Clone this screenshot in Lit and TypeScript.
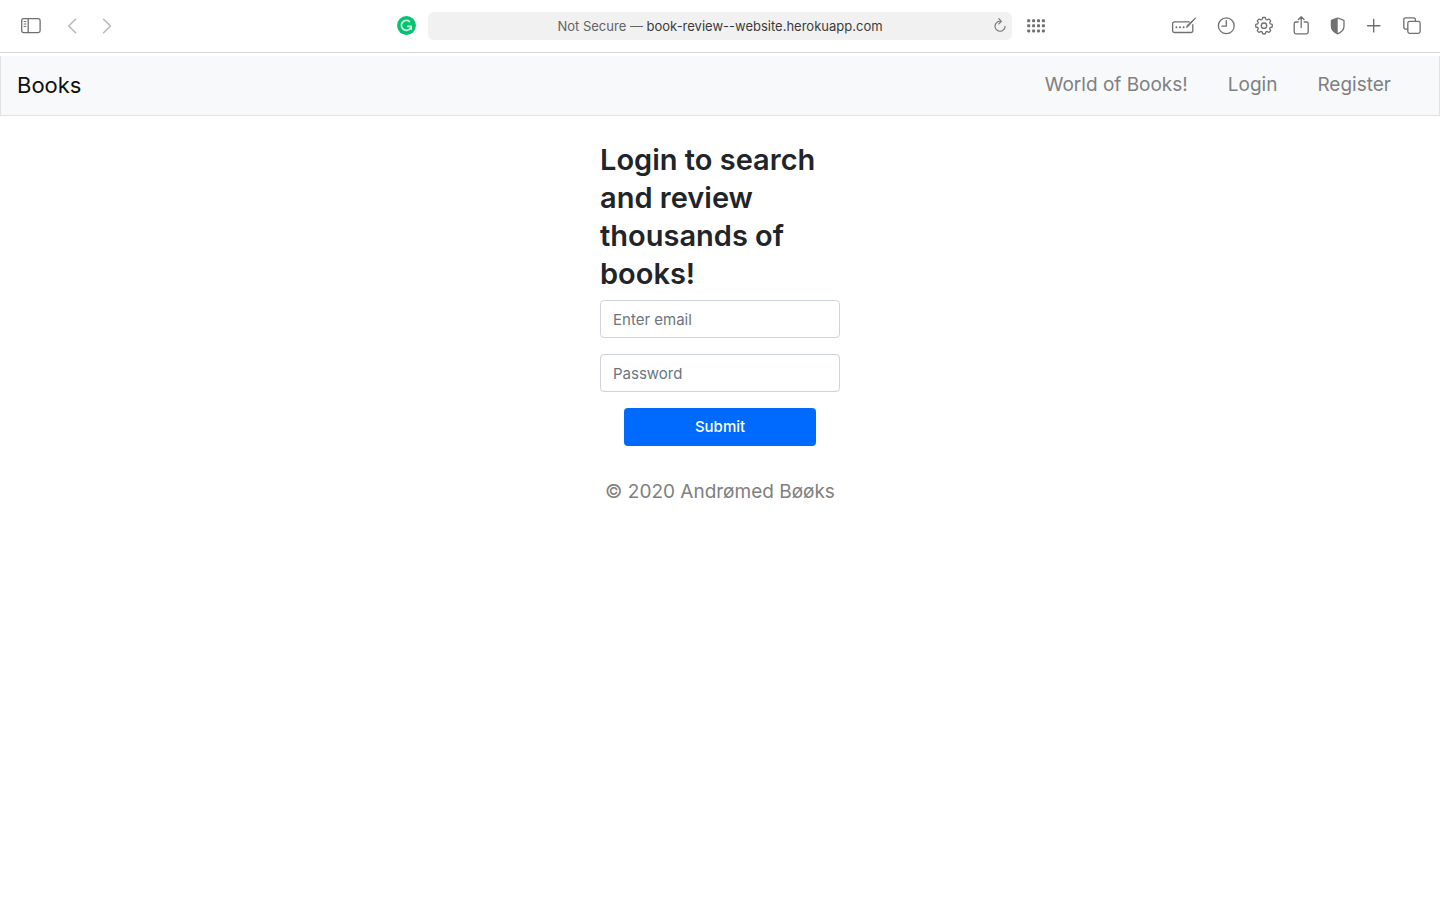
import { LitElement, html, css, svg } from "lit";
import { customElement } from "lit/decorators.js";

const gearPath = (() => {
  const teeth = 8;
  const parts: string[] = [];
  const at = (r: number, deg: number) => {
    const a = (deg * Math.PI) / 180;
    return `${(9 + r * Math.sin(a)).toFixed(2)} ${(9.7 - r * Math.cos(a)).toFixed(2)}`;
  };
  for (let i = 0; i < teeth; i++) {
    const d = (i * 360) / teeth;
    parts.push(`${i ? "L" : "M"}${at(6.6, d - 16)}L${at(8.3, d - 9)}A8.4 8.4 0 0 1 ${at(8.3, d + 9)}L${at(6.6, d + 16)}`);
    parts.push(`A2 2 0 0 0 ${at(6.6, d + 29)}`);
  }
  return parts.join("") + "Z";
})();

@customElement("browser-toolbar")
export class BrowserToolbar extends LitElement {
  static styles = css`
    :host {
      display: block;
      font-family: Inter, "Liberation Sans", sans-serif;
    }
    .bar {
      display: grid;
      grid-template-columns: minmax(0, 1fr) 40.5% minmax(0, 1fr);
      align-items: center;
      height: 52px;
      background: #fff;
      border-bottom: 1px solid #d8d8d8;
    }
    .side {
      display: flex;
      align-items: center;
      justify-content: space-between;
    }
    .start {
      padding: 0 12px 0 21px;
    }
    .end {
      padding: 0 19px 0 15px;
    }
    .group {
      display: flex;
      align-items: center;
    }
    .start .group {
      gap: 25px;
    }
    .end .group {
      gap: 20px;
    }
    button {
      display: block;
      margin: 0;
      padding: 0;
      border: 0;
      background: none;
      color: #707070;
      font: inherit;
      cursor: pointer;
    }
    .faint {
      color: #b9b9b9;
    }
    svg {
      display: block;
      fill: none;
      stroke: currentColor;
      stroke-width: 1.3;
      stroke-linecap: round;
      stroke-linejoin: round;
    }
    .address {
      display: grid;
      grid-template-columns: 19px minmax(0, 1fr) 19px;
      align-items: center;
      height: 28px;
      border-radius: 6px;
      background: #f1f1f1;
    }
    .url {
      grid-column: 2;
      font-size: 13px;
      line-height: 28px;
      color: #636363;
      white-space: nowrap;
    }
    .host {
      color: #3b3b3b;
    }
  `;

  render() {
    return html`
      <header class="bar">
        <div class="side start">
          <div class="group">
            <button aria-label="Show sidebar">
              <svg width="21" height="20" viewBox="0 0 21 20">
                <rect x="0.7" y="2.6" width="18.4" height="14" rx="1.8" />
                <path d="M7.2 2.6V16.6" />
                <path d="M3.1 5.6h1.8M3.1 8h1.8M3.1 10.4h1.8" stroke-width="1" />
              </svg>
            </button>
            <button class="faint" aria-label="Back">
              <svg width="10" height="20" viewBox="0 0 10 20"><path d="M8.6 3.3L1.7 10L8.6 16.7" stroke-width="1.6" /></svg>
            </button>
            <button class="faint" aria-label="Forward">
              <svg width="10" height="20" viewBox="0 0 10 20"><path d="M1.6 3.3L8.5 10L1.6 16.7" stroke-width="1.6" /></svg>
            </button>
          </div>
          <button aria-label="Grammarly">
            <svg width="19" height="20" viewBox="0 0 19 20">
              <circle cx="9.5" cy="9.5" r="9.4" fill="#06c270" stroke="none" />
              <path d="M13 5.8A5 5 0 1 0 13.9 11.6" stroke="#c9f5e0" stroke-width="1.7" stroke-linecap="butt" />
              <path d="M10.2 10.3H14.2V14" stroke="#c9f5e0" stroke-width="1.7" stroke-linecap="butt" stroke-linejoin="miter" />
            </svg>
          </button>
        </div>
        <div class="address">
          <button class="url">Not Secure — <span class="host">book-review--website.herokuapp.com</span></button>
          <button aria-label="Reload">
            <svg width="14" height="20" viewBox="0 0 14 20">
              <path d="M7.2 5.3A5 5 0 1 0 12 10.4" stroke-width="1.1" />
              <path d="M5.8 2.7L8.4 5.3L5.8 7.9" stroke-width="1.1" />
            </svg>
          </button>
        </div>
        <div class="side end">
          <button aria-label="Show top sites">
            <svg width="18" height="20" viewBox="0 0 18 20">
              ${[4.7, 9.8, 14.9].map((y) =>
                [1.7, 6.6, 11.5, 16.4].map(
                  (x) => svg`<rect x=${x - 1.5} y=${y - 1.5} width="3" height="3" rx="0.8" fill="currentColor" stroke="none" />`
                )
              )}
            </svg>
          </button>
          <div class="group">
            <button aria-label="AutoFill form">
              <svg width="26" height="20" viewBox="0 0 26 20">
                <path d="M18.3 5.9H3.4a1.8 1.8 0 0 0-1.8 1.8v7a1.8 1.8 0 0 0 1.8 1.8H20a1.8 1.8 0 0 0 1.8-1.8V8.6" />
                <path d="M24.4 2.2L17.2 10.4L15.6 11.5L16.2 9.6Z" fill="currentColor" stroke-width="1" />
                <path d="M5.4 11.3h.1M9 11.3h.1M12.6 11.3h.1" stroke-width="1.9" />
              </svg>
            </button>
            <button aria-label="History">
              <svg width="18" height="20" viewBox="0 0 18 20">
                <circle cx="9.3" cy="9.8" r="7.9" />
                <path d="M9.3 4.6V10.2H4.8" />
              </svg>
            </button>
            <button aria-label="Settings">
              <svg width="18" height="20" viewBox="0 0 18 20">
                <path d=${gearPath} />
                <circle cx="9" cy="9.7" r="2.7" />
              </svg>
            </button>
            <button aria-label="Share">
              <svg width="16" height="20" viewBox="0 0 16 20">
                <path d="M5.2 6H3a1.8 1.8 0 0 0-1.8 1.8v8.3a1.8 1.8 0 0 0 1.8 1.8h10.4a1.8 1.8 0 0 0 1.8-1.8V7.8A1.8 1.8 0 0 0 13.4 6H11.2" />
                <path d="M8.2 11.6V.9M5.4 3.5L8.2.8L11 3.5" />
              </svg>
            </button>
            <button aria-label="Privacy report">
              <svg width="16" height="20" viewBox="0 0 16 20">
                <path d="M8.7 2L14.4 4.2Q15 4.4 15 5.1V10.3C15 14 12.4 16.2 8.7 17.8C5 16.2 2.4 14 2.4 10.3V5.1Q2.4 4.4 3 4.2Z" />
                <path d="M8.7 2V17.8C5 16.2 2.4 14 2.4 10.3V5.1Q2.4 4.4 3 4.2Z" fill="currentColor" stroke="none" />
              </svg>
            </button>
            <button aria-label="New tab">
              <svg width="18" height="20" viewBox="0 0 18 20"><path d="M8.7 3.5V15.9M2.5 9.7H14.9" stroke-width="1.4" /></svg>
            </button>
            <button aria-label="Tab overview">
              <svg width="18" height="20" viewBox="0 0 18 20">
                <path d="M4.8 13.1H2.6A1.8 1.8 0 0 1 .8 11.3V3.6A1.8 1.8 0 0 1 2.6 1.8H10.6A1.8 1.8 0 0 1 12.4 3.6V5.4" />
                <rect x="4.8" y="5.4" width="12.3" height="12" rx="1.8" />
              </svg>
            </button>
          </div>
        </div>
      </header>
    `;
  }
}

@customElement("app-root")
export class AppRoot extends LitElement {
  static styles = css`
    :host {
      display: block;
      min-height: 100vh;
      background: #fff;
      color: #212529;
      font-family: Inter, "Liberation Sans", sans-serif;
      font-size: 16px;
      line-height: 24px;
    }
    * {
      box-sizing: border-box;
    }
    .nav {
      display: flex;
      align-items: center;
      justify-content: space-between;
      height: 60px;
      margin-top: 3px;
      padding: 0 48px 2px 16px;
      border: 1px solid #dee2e6;
      border-top: 0;
      background: #f8f9fb;
    }
    a {
      color: inherit;
      text-decoration: none;
    }
    .brand {
      color: #101010;
      font-size: 22px;
    }
    .links {
      display: flex;
      gap: 40px;
      margin: 0;
      padding: 0;
      list-style: none;
      color: #7f8080;
      font-size: 19px;
    }
    .panel {
      width: 16.6667%;
      min-width: 240px;
      margin: 25px auto 0;
    }
    h1 {
      margin: 0 0 7px;
      font-size: 29px;
      font-weight: 600;
      line-height: 38px;
    }
    .form {
      display: flex;
      flex-direction: column;
      align-items: center;
      gap: 16px;
    }
    .field {
      width: 100%;
      height: 38px;
      padding: 0 12px;
      border: 1px solid #ced4da;
      border-radius: 4px;
      background: #fff;
      color: #495057;
      font: inherit;
      font-size: 15px;
    }
    .field::placeholder {
      color: #6c757d;
      opacity: 1;
    }
    .submit {
      width: 80%;
      height: 38px;
      border: 0;
      border-radius: 4px;
      background: #006aff;
      color: #fff;
      font: inherit;
      font-size: 15px;
      font-weight: 500;
      cursor: pointer;
    }
    .footer {
      margin-top: 34px;
      color: #808080;
      font-size: 19px;
      text-align: center;
      white-space: nowrap;
    }
  `;

  render() {
    return html`
      <browser-toolbar></browser-toolbar>
      <nav class="nav">
        <a class="brand" href="#">Books</a>
        <ul class="links">
          <li><a href="#">World of Books!</a></li>
          <li><a href="#">Login</a></li>
          <li><a href="#">Register</a></li>
        </ul>
      </nav>
      <main class="panel">
        <h1>Login to search and review thousands of books!</h1>
        <form class="form" @submit=${(e: Event) => e.preventDefault()}>
          <input class="field" type="email" placeholder="Enter email" aria-label="Enter email" />
          <input class="field" type="password" placeholder="Password" aria-label="Password" />
          <button class="submit" type="submit">Submit</button>
        </form>
        <footer class="footer">© 2020 Andrømed Bøøks</footer>
      </main>
    `;
  }
}
